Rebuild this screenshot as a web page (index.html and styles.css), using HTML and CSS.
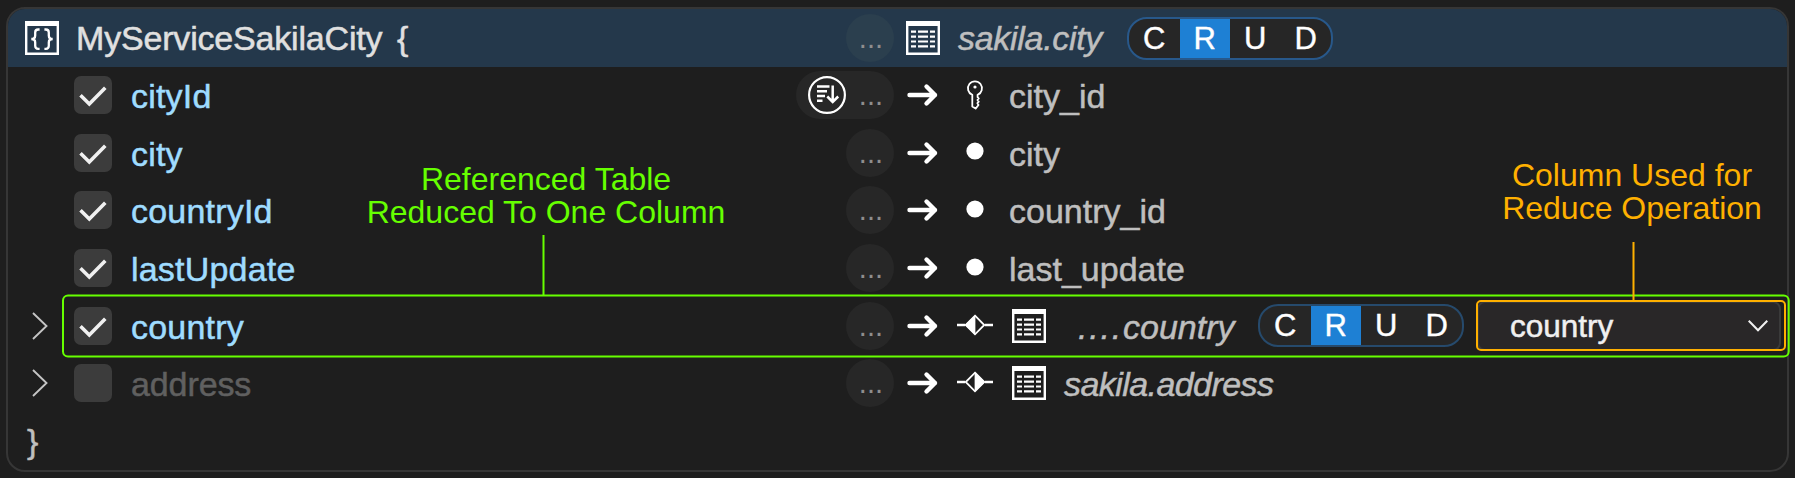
FILE: index.html
```
<!DOCTYPE html>
<html lang="en">
<head>
<meta charset="utf-8">
<title>MyServiceSakilaCity</title>
<link rel="stylesheet" href="styles.css">
</head>
<body>
<svg class="defs" width="0" height="0" aria-hidden="true">
  <symbol id="object" viewBox="0 0 34 34">
    <path fill="#fff" fill-rule="evenodd" d="M0 0H34V34H0ZM2.4 5V31.6H31.6V5Z"/>
    <path fill="none" stroke="#fff" stroke-width="2.3" d="M14.6 8.5H13.2Q10.2 8.5 10.2 11.5V14.5Q10.2 18 6.3 18Q10.2 18 10.2 21.5V24.8Q10.2 27.8 13.2 27.8H14.6M19.4 8.5H20.8Q23.8 8.5 23.8 11.5V14.5Q23.8 18 27.7 18Q23.8 18 23.8 21.5V24.8Q23.8 27.8 20.8 27.8H19.4"/>
  </symbol>
  <symbol id="table" viewBox="0 0 34 34">
    <path fill="#fff" fill-rule="evenodd" d="M0 0H34V34H0ZM2.4 5V31.6H31.6V5Z"/>
    <path fill="none" stroke="#fff" stroke-width="2.2" d="M5 10.7H10M12 10.7H22M24 10.7H29M5 15.6H10M12 15.6H22M24 15.6H29M5 20.5H10M12 20.5H22M24 20.5H29M5 25.4H10M12 25.4H22M24 25.4H29"/>
  </symbol>
  <symbol id="check" viewBox="0 0 38 38">
    <path fill="none" stroke="#f0f0f0" stroke-width="3.6" d="M6.5 19.3L15.3 28L31.3 11.8"/>
  </symbol>
  <symbol id="arrow" viewBox="0 0 32 24">
    <path fill="none" stroke="#fff" stroke-width="4.4" stroke-linecap="round" stroke-linejoin="round" d="M2.5 12H28M19.5 3.5L28 12L19.5 20.5"/>
  </symbol>
  <symbol id="key" viewBox="0 0 18 32">
    <path fill="none" stroke="#fff" stroke-width="1.8" stroke-linejoin="round" d="M6.3 15.8A7 7 0 1 1 11.6 15.8V18.2L12.8 19.5L11.4 21L12.8 22.7L11.4 24.2L12.5 26L9.6 29.6L6.3 27.5Z"/>
    <circle cx="9" cy="8" r="1.6" fill="#fff"/>
  </symbol>
  <symbol id="dot" viewBox="0 0 18 18"><circle cx="9" cy="9" r="8.6" fill="#fff"/></symbol>
  <symbol id="link-left" viewBox="0 0 36 22">
    <path stroke="#fff" stroke-width="2.6" d="M0 11H8M28 11H36"/>
    <path fill="none" stroke="#fff" stroke-width="1.8" d="M18 1.7L27.3 11L18 20.3L8.7 11Z"/>
    <path fill="#fff" d="M18.4 1V21L8 11Z"/>
  </symbol>
  <symbol id="link-right" viewBox="0 0 36 22">
    <path stroke="#fff" stroke-width="2.6" d="M0 11H8M28 11H36"/>
    <path fill="none" stroke="#fff" stroke-width="1.8" d="M18 1.7L27.3 11L18 20.3L8.7 11Z"/>
    <path fill="#fff" d="M17.6 1V21L28 11Z"/>
  </symbol>
  <symbol id="sort" viewBox="0 0 38 38">
    <circle cx="19" cy="19" r="17.9" fill="none" stroke="#fff" stroke-width="2.2"/>
    <path fill="none" stroke="#fff" stroke-width="2.5" d="M9 10.5H21.5M9 15.2H19M9 20H17M9 24.7H14.5M24.7 9.5V26M19.3 20.5L24.7 26L30.2 20.5"/>
  </symbol>
  <symbol id="chevron-right" viewBox="0 0 16 28">
    <path fill="none" stroke="#c4c4c4" stroke-width="1.9" d="M1 1L14.5 14L1 27"/>
  </symbol>
  <symbol id="chevron-down" viewBox="0 0 20 12">
    <path fill="none" stroke="#f0f0f0" stroke-width="2.1" d="M.7 .8L10 10.3L19.3 .8"/>
  </symbol>
</svg>

<main class="panel">
  <header class="row header">
    <svg class="object"><use href="#object"/></svg>
    <span class="title">MyServiceSakilaCity</span><span class="open">{</span>
    <div class="mapping">
      <span class="actions">...</span>
      <svg class="table"><use href="#table"/></svg>
      <span class="db-name">sakila.city</span>
      <div class="crud crud-header"><span>C</span><span class="on">R</span><span>U</span><span>D</span></div>
    </div>
  </header>

  <div class="row">
    <span class="expander"></span>
    <span class="checkbox"><svg><use href="#check"/></svg></span>
    <span class="field">cityId</span>
    <div class="mapping">
      <span class="actions sorted"><svg class="sort"><use href="#sort"/></svg>...</span>
      <svg class="arrow"><use href="#arrow"/></svg>
      <span class="kind"><svg class="key"><use href="#key"/></svg></span>
      <span class="column">city_id</span>
    </div>
  </div>
  <div class="row">
    <span class="expander"></span>
    <span class="checkbox"><svg><use href="#check"/></svg></span>
    <span class="field">city</span>
    <div class="mapping">
      <span class="actions">...</span>
      <svg class="arrow"><use href="#arrow"/></svg>
      <span class="kind"><svg class="dot"><use href="#dot"/></svg></span>
      <span class="column">city</span>
    </div>
  </div>
  <div class="row">
    <span class="expander"></span>
    <span class="checkbox"><svg><use href="#check"/></svg></span>
    <span class="field">countryId</span>
    <div class="mapping">
      <span class="actions">...</span>
      <svg class="arrow"><use href="#arrow"/></svg>
      <span class="kind"><svg class="dot"><use href="#dot"/></svg></span>
      <span class="column">country_id</span>
    </div>
  </div>
  <div class="row">
    <span class="expander"></span>
    <span class="checkbox"><svg><use href="#check"/></svg></span>
    <span class="field">lastUpdate</span>
    <div class="mapping">
      <span class="actions">...</span>
      <svg class="arrow"><use href="#arrow"/></svg>
      <span class="kind"><svg class="dot"><use href="#dot"/></svg></span>
      <span class="column">last_update</span>
    </div>
  </div>
  <div class="row">
    <span class="expander"><svg><use href="#chevron-right"/></svg></span>
    <span class="checkbox"><svg><use href="#check"/></svg></span>
    <span class="field">country</span>
    <div class="mapping">
      <span class="actions">...</span>
      <svg class="arrow"><use href="#arrow"/></svg>
      <span class="kind"><svg class="link"><use href="#link-left"/></svg></span>
      <svg class="table linked"><use href="#table"/></svg>
      <span class="db-name reduced"><span class="dots">....</span>country</span>
      <div class="crud crud-row"><span>C</span><span class="on">R</span><span>U</span><span>D</span></div>
      <div class="select"><span>country</span><svg><use href="#chevron-down"/></svg></div>
    </div>
  </div>
  <div class="row">
    <span class="expander"><svg><use href="#chevron-right"/></svg></span>
    <span class="checkbox"></span>
    <span class="field off">address</span>
    <div class="mapping">
      <span class="actions">...</span>
      <svg class="arrow"><use href="#arrow"/></svg>
      <span class="kind"><svg class="link"><use href="#link-right"/></svg></span>
      <svg class="table linked"><use href="#table"/></svg>
      <span class="db-name tight">sakila.address</span>
    </div>
  </div>
  <footer class="row close">}</footer>
</main>

<svg class="marks" viewBox="0 0 1795 478">
  <g fill="none" stroke="#66ff00" stroke-width="2">
    <rect x="63" y="295.5" width="1725.7" height="61" rx="5"/>
    <path d="M543.5 235V295"/>
  </g>
  <g fill="none" stroke="#ffb000" stroke-width="2">
    <rect x="1477" y="301" width="308" height="49" rx="4"/>
    <path d="M1633.5 242V302"/>
  </g>
</svg>
<p class="note note-table">Referenced Table<br>Reduced To One Column</p>
<p class="note note-column">Column Used for<br>Reduce Operation</p>
</body>
</html>
```
FILE: styles.css
```
* { box-sizing: border-box; }

body {
  margin: 0;
  width: 1795px;
  height: 478px;
  overflow: hidden;
  position: relative;
  background: #1e1e1e;
  font: 34px/40px "Liberation Sans", Arial, sans-serif;
  color: #bfbfbf;
}

.defs { position: absolute; }
svg { display: block; flex: none; }

.panel {
  width: 1783px;
  height: 465px;
  margin: 7px 0 0 6px;
  border: 2px solid #363636;
  border-radius: 19px;
  overflow: hidden;
}

.row {
  display: flex;
  align-items: center;
  height: 57.6px;
  padding-bottom: 1px;
  white-space: nowrap;
  -webkit-text-stroke: 0.5px currentColor;
}

.header {
  height: 58px;
  padding: 0 0 0 17px;
  background: #24384b;
}

.object, .table { width: 34px; height: 34px; }
.title { margin-left: 17px; width: 321px; color: #e0e0e0; letter-spacing: -0.18px; }
.open { color: #e0e0e0; }

.expander { width: 66px; padding-left: 24px; }
.expander svg { width: 16px; height: 28px; }

.checkbox {
  width: 38px;
  height: 38px;
  border-radius: 7px;
  background: #3c3c3c;
}
.checkbox svg { width: 38px; height: 38px; }

.field { margin-left: 19px; padding-top: 2px; color: #9fdcff; letter-spacing: 0.2px; }
.off { color: #606060; letter-spacing: -0.1px; }

.mapping {
  display: flex;
  align-items: center;
  justify-content: flex-start;
  width: 1001px;
  margin-left: auto;
}

.actions {
  display: flex;
  align-items: center;
  justify-content: flex-end;
  width: 48px;
  height: 48px;
  margin-left: 60px;
  padding: 0 11px 0 0;
  border-radius: 24px;
  background: #272727;
  color: #8e8e8e;
  font-size: 29px;
  -webkit-text-stroke: 0;
}
.header .actions { background: #2b3f4e; margin-right: 12px; }
.sorted { width: 98px; margin-left: 10px; }
.sort { width: 38px; height: 38px; margin-right: 13px; }

.arrow { width: 32px; height: 24px; margin-left: 13px; }
.kind { display: flex; justify-content: center; width: 36px; margin: 0 0 0 18px; }
.key { width: 18px; height: 32px; }
.dot { width: 18px; height: 18px; margin-bottom: 3px; }
.link { width: 36px; height: 22px; margin-bottom: 2px; }
.linked { margin-left: 19px; }

.column { margin-left: 16px; padding-top: 2px; }
.db-name { margin-left: 18px; padding-top: 2px; font-style: italic; }
.header .db-name { padding-top: 0; width: 169px; letter-spacing: -0.3px; }
.reduced { width: 194px; padding-left: 14px; }
.tight { letter-spacing: -0.57px; }
.dots { letter-spacing: 1.8px; }

.crud {
  display: flex;
  width: 206px;
  height: 43px;
  border: 2px solid #264a6c;
  border-radius: 20px;
  overflow: hidden;
  background: #262626;
  color: #fff;
  font-size: 31px;
  line-height: 39px;
  text-align: center;
  -webkit-text-stroke: 0.4px #fff;
}
.crud-header { border-color: #28588a; }
.crud span { flex: 1; }
.crud .on { background: #1e80d4; }

.select {
  display: flex;
  align-items: center;
  justify-content: space-between;
  width: 304px;
  height: 50px;
  margin-left: 13px;
  padding: 0 11px 0 31px;
  border: 2px solid #3a3a3a;
  border-radius: 8px;
  background: #292728;
  color: #f0f0f0;
  font-size: 31.5px;
}
.select svg { width: 20px; height: 12px; }

.close { height: 52px; padding: 4px 0 0 19px; }

.marks { position: absolute; inset: 0; width: 1795px; height: 478px; }

.note {
  position: absolute;
  margin: 0;
  font-size: 32px;
  line-height: 33px;
  text-align: center;
  white-space: nowrap;
}
.note-table { left: 346px; top: 163px; width: 400px; color: #66ff00; }
.note-column { left: 1432px; top: 159px; width: 400px; color: #ffb000; }
```
